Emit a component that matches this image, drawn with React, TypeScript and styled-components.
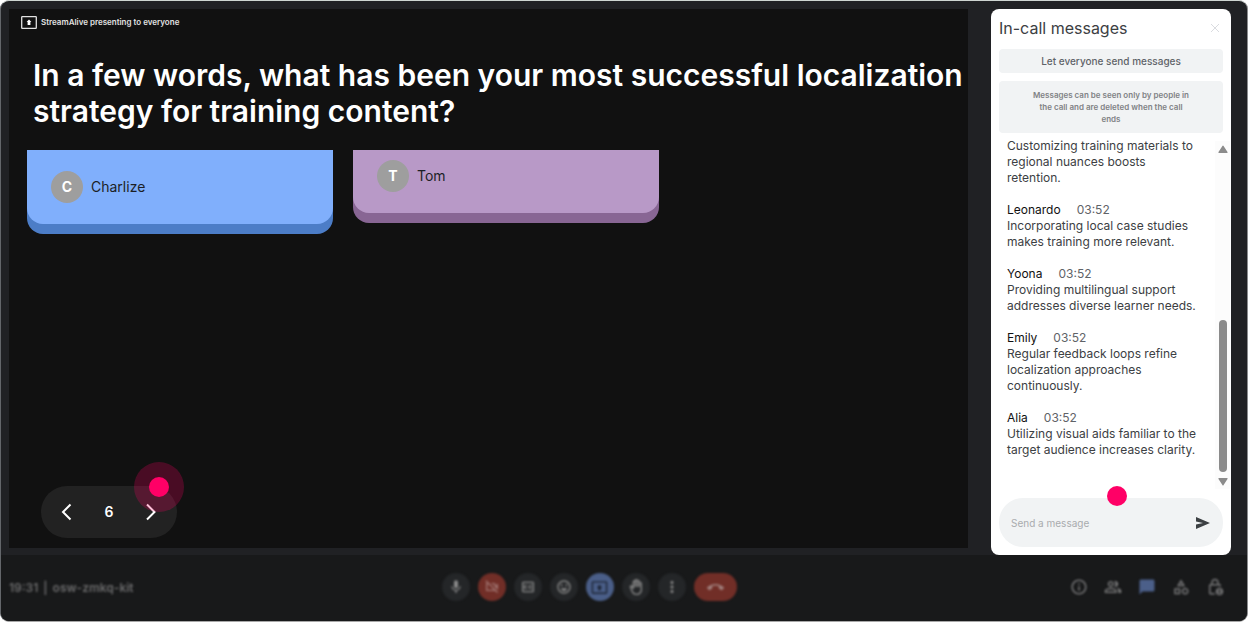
import React from "react";
import styled, { createGlobalStyle, css } from "styled-components";
import {
  MdMic,
  MdOutlineVideocamOff,
  MdOutlineClosedCaption,
  MdOutlineEmojiEmotions,
  MdOutlinePresentToAll,
  MdOutlineBackHand,
  MdMoreVert,
  MdCallEnd,
  MdOutlineInfo,
  MdOutlinePeopleAlt,
  MdModeComment,
  MdOutlineCategory,
  MdOutlineLockPerson,
} from "react-icons/md";

const GlobalStyle = createGlobalStyle`
  *, *::before, *::after { box-sizing: border-box; }
  html, body { margin: 0; background: #fff; }
  body { font-family: Inter, "Liberation Sans", sans-serif; }
  button, input { font: inherit; }
  h1, h2, h3, p, ol { margin: 0; padding: 0; }
`;

const Page = styled.div`
  display: flex;
  min-height: 100vh;
  background: #fff;
`;

const Frame = styled.div`
  flex: 1;
  display: flex;
  flex-direction: column;
  background: #202124;
  border: 1px solid;
  border-color: #ced5d1 #8b8c8e #a8a8a8 #63666a;
  border-radius: 9px;
  overflow: hidden;
`;

const Main = styled.main`
  flex: 1;
  display: flex;
  gap: 23px;
  padding: 8px 16px 0 8px;
`;

const Stage = styled.section`
  flex: 1;
  display: flex;
  flex-direction: column;
  align-items: flex-start;
  margin-bottom: 7px;
  padding: 6px 0 10px 12px;
  background: #111;
  overflow: hidden;
`;

const Presenter = styled.div`
  display: flex;
  align-items: center;
  gap: 4px;
  color: #e2e2e2;
  font-size: 8px;
  font-weight: 600;
  line-height: 14px;
`;

const Question = styled.h1`
  margin: 28px 0 0 12px;
  color: #fff;
  font-size: 30px;
  font-weight: 600;
  line-height: 36px;
`;

const Cards = styled.div`
  display: flex;
  flex-wrap: wrap;
  align-items: flex-start;
  gap: 20px;
  margin: 21px 0 0 6px;
`;

const Card = styled.article<{ $face: string; $edge: string; $top: number }>`
  display: flex;
  align-items: center;
  gap: 8px;
  width: 306px;
  padding: ${(p) => p.$top}px 24px 21px;
  border-radius: 0 0 16px 16px;
  background: ${(p) => p.$face};
  box-shadow: 0 10px 0 ${(p) => p.$edge};
  color: #1c1f26;
  font-size: 14px;
  line-height: 16px;
`;

const Avatar = styled.span`
  display: grid;
  place-items: center;
  width: 32px;
  height: 32px;
  border-radius: 50%;
  background: #9e9e9e;
  color: #fff;
  font-weight: 700;
`;

const Pager = styled.nav`
  position: relative;
  display: flex;
  align-items: center;
  justify-content: space-between;
  width: 136px;
  height: 52px;
  margin: auto 0 0 20px;
  padding: 0 16px;
  border-radius: 26px;
  background: #222;
  color: #fff;
  font-size: 14px;
  font-weight: 600;
  line-height: 16px;
`;

const PagerButton = styled.button`
  display: grid;
  place-items: center;
  width: 20px;
  height: 24px;
  padding: 0;
  border: 0;
  background: none;
  color: #fff;
`;

const Halo = styled.span`
  position: absolute;
  top: -24px;
  right: -7px;
  display: grid;
  place-items: center;
  width: 50px;
  height: 50px;
  border-radius: 50%;
  background: rgba(255, 0, 102, 0.24);
  pointer-events: none;
`;

const Dot = styled.span`
  width: 20px;
  height: 20px;
  border-radius: 50%;
  background: #ff0066;
`;

const Panel = styled.aside`
  display: flex;
  flex-direction: column;
  width: 240px;
  padding: 8px;
  border-radius: 8px;
  background: #fff;
  color: #3c4043;
`;

const PanelHeader = styled.header`
  display: flex;
  align-items: center;
  justify-content: space-between;
  height: 22px;
  margin-bottom: 10px;
`;

const PanelTitle = styled.h2`
  font-size: 16px;
  font-weight: 400;
  line-height: 22px;
`;

const CloseButton = styled.button`
  display: grid;
  place-items: center;
  width: 16px;
  height: 16px;
  padding: 0;
  border: 0;
  background: none;
  color: #dadce0;
`;

const AllowButton = styled.button`
  height: 24px;
  padding: 0;
  border: 0;
  border-radius: 4px;
  background: #f1f3f4;
  color: #5f6368;
  font-size: 10px;
  font-weight: 500;
`;

const Notice = styled.p`
  margin-top: 8px;
  padding: 8px 32px;
  border-radius: 4px;
  background: #f1f3f4;
  color: #808285;
  font-size: 8px;
  font-weight: 600;
  line-height: 12px;
  text-align: center;
`;

const LogArea = styled.div`
  flex: 1;
  display: flex;
  min-height: 0;
  margin: 5px -7px 9px 0;
`;

const Log = styled.ol`
  flex: 1;
  display: flex;
  flex-direction: column;
  justify-content: flex-end;
  gap: 16px;
  padding: 0 16px 31px 8px;
  list-style: none;
  font-size: 12px;
  line-height: 16px;
`;

const MessageMeta = styled.div`
  display: flex;
  gap: 16px;
  color: #5f6368;
`;

const Sender = styled.span`
  color: #111;
`;

const ScrollTrack = styled.div`
  display: flex;
  flex-direction: column;
  align-items: center;
  width: 15px;
  margin-top: 3px;
  padding: 4px 0 3px;
  background: #fcfcfc;
  color: #8b8b8b;
  svg { display: block; }
`;

const ScrollThumb = styled.div`
  width: 8px;
  height: 152px;
  margin: auto 0 6px;
  border-radius: 4px;
  background: #8b8b8b;
`;

const Composer = styled.form`
  position: relative;
  display: flex;
  align-items: center;
  height: 49px;
  padding: 0 12px;
  border-radius: 24px;
  background: #f1f3f4;
`;

const MessageInput = styled.input`
  flex: 1;
  min-width: 0;
  padding: 0;
  border: 0;
  outline: 0;
  background: none;
  font-size: 10px;
  &::placeholder { color: #a9abae; opacity: 1; }
`;

const SendButton = styled.button`
  display: grid;
  padding: 0;
  border: 0;
  background: none;
  color: #3c4043;
`;

const InputMarker = styled(Dot)`
  position: absolute;
  top: -12px;
  left: 108px;
`;

const CallBar = styled.footer`
  display: grid;
  grid-template-columns: 8fr auto 9fr;
  align-items: center;
  height: 66px;
  padding: 0 23px 2px 8px;
  background: #18191a;
  color: #6b6b6c;
`;

const softened = css`
  filter: blur(1px);
`;

const MeetingInfo = styled.div`
  display: flex;
  gap: 5px;
  font-size: 12px;
  font-weight: 600;
  ${softened}
`;

const Controls = styled.div`
  display: flex;
  gap: 8px;
  ${softened}
`;

const ControlButton = styled.button<{ $bg?: string; $fg?: string; $wide?: boolean }>`
  display: grid;
  place-items: center;
  width: ${(p) => (p.$wide ? 43 : 28)}px;
  height: 28px;
  padding: 0;
  border: 0;
  border-radius: 14px;
  background: ${(p) => p.$bg || "#242628"};
  color: ${(p) => p.$fg || "#8a8a8a"};
`;

const Tools = styled.div`
  display: flex;
  justify-content: flex-end;
  gap: 16px;
  ${softened}
`;

const ToolButton = styled.button<{ $active?: boolean }>`
  display: grid;
  padding: 0;
  border: 0;
  background: none;
  color: ${(p) => (p.$active ? "#4b5f89" : "#777778")};
`;

const ChatIcon = styled(MdModeComment)`
  transform: scaleX(-1);
`;

const Chevron = ({ next }: { next?: boolean }) => (
  <svg width="12" height="18" viewBox="0 0 12 18" fill="none" stroke="currentColor" strokeWidth="2">
    <path d={next ? "M2 1.500l7.500 7.500L2 16.500" : "M9.500 1.500L2 9l7.500 7.500"} />
  </svg>
);

const Arrow = ({ down }: { down?: boolean }) => (
  <svg width="10" height="8" viewBox="0 0 10 8" fill="currentColor">
    <path d={down ? "M1 0h8q1 0 .5 1L5.6 7q-.6 1-1.2 0L.5 1Q0 0 1 0z" : "M1 8h8q1 0 .5-1L5.6 1Q5 0 4.4 1L.5 7Q0 8 1 8z"} />
  </svg>
);

const messages = [
  { name: "Leonardo", text: "Incorporating local case studies makes training more relevant." },
  { name: "Yoona", text: "Providing multilingual support addresses diverse learner needs." },
  { name: "Emily", text: "Regular feedback loops refine localization approaches continuously." },
  { name: "Alia", text: "Utilizing visual aids familiar to the target audience increases clarity." },
];

export default function App() {
  return (
    <Page>
      <GlobalStyle />
      <Frame>
        <Main>
          <Stage>
            <Presenter>
              <svg width="16" height="13" viewBox="0 0 16 13" fill="none">
                <rect x="0.7" y="0.7" width="14.6" height="11.6" rx="0.6" stroke="currentColor" strokeWidth="1.3" />
                <path d="M8 3.5l2.4 2.6H9.4v3H6.6v-3H5.6z" fill="#fff" />
              </svg>
              StreamAlive presenting to everyone
            </Presenter>
            <Question>
              In a few words, what has been your most successful localization strategy for training content?
            </Question>
            <Cards>
              <Card $face="#80affc" $edge="#4c7dc7" $top={21}>
                <Avatar>C</Avatar>
                Charlize
              </Card>
              <Card $face="#b899c7" $edge="#886694" $top={10}>
                <Avatar>T</Avatar>
                Tom
              </Card>
            </Cards>
            <Pager aria-label="Questions">
              <PagerButton aria-label="Previous question"><Chevron /></PagerButton>
              <span>6</span>
              <PagerButton aria-label="Next question"><Chevron next /></PagerButton>
              <Halo><Dot /></Halo>
            </Pager>
          </Stage>
          <Panel>
            <PanelHeader>
              <PanelTitle>In-call messages</PanelTitle>
              <CloseButton aria-label="Close messages">
                <svg width="10" height="10" viewBox="0 0 10 10" stroke="currentColor" strokeWidth="1">
                  <path d="M1 1l8 8M9 1L1 9" />
                </svg>
              </CloseButton>
            </PanelHeader>
            <AllowButton>Let everyone send messages</AllowButton>
            <Notice>Messages can be seen only by people in the call and are deleted when the call ends</Notice>
            <LogArea>
              <Log>
                <li>Customizing training materials to regional nuances boosts retention.</li>
                {messages.map((m) => (
                  <li key={m.name}>
                    <MessageMeta>
                      <Sender>{m.name}</Sender>
                      <time>03:52</time>
                    </MessageMeta>
                    <p>{m.text}</p>
                  </li>
                ))}
              </Log>
              <ScrollTrack aria-hidden="true">
                <Arrow />
                <ScrollThumb />
                <Arrow down />
              </ScrollTrack>
            </LogArea>
            <Composer onSubmit={(e) => e.preventDefault()}>
              <MessageInput aria-label="Send a message" placeholder="Send a message" />
              <SendButton aria-label="Send">
                <svg width="16" height="14" viewBox="0 0 16 14" fill="currentColor">
                  <path d="M1 1l14 6L1 13V8.600l7-1.600-7-1.600z" />
                </svg>
              </SendButton>
              <InputMarker />
            </Composer>
          </Panel>
        </Main>
        <CallBar>
          <MeetingInfo>
            <span>19:31</span>
            <span>|</span>
            <span>osw-zmkq-kit</span>
          </MeetingInfo>
          <Controls>
            <ControlButton aria-label="Microphone"><MdMic size={16} /></ControlButton>
            <ControlButton aria-label="Turn on camera" $bg="#712e27" $fg="#a07470"><MdOutlineVideocamOff size={16} /></ControlButton>
            <ControlButton aria-label="Captions"><MdOutlineClosedCaption size={16} /></ControlButton>
            <ControlButton aria-label="Reactions"><MdOutlineEmojiEmotions size={16} /></ControlButton>
            <ControlButton aria-label="Present" $bg="#4a5e88" $fg="#1d2535"><MdOutlinePresentToAll size={17} /></ControlButton>
            <ControlButton aria-label="Raise hand"><MdOutlineBackHand size={16} /></ControlButton>
            <ControlButton aria-label="More options"><MdMoreVert size={18} /></ControlButton>
            <ControlButton aria-label="Leave call" $bg="#712e27" $fg="#a07f7c" $wide><MdCallEnd size={17} /></ControlButton>
          </Controls>
          <Tools>
            <ToolButton aria-label="Meeting details"><MdOutlineInfo size={18} /></ToolButton>
            <ToolButton aria-label="People"><MdOutlinePeopleAlt size={18} /></ToolButton>
            <ToolButton aria-label="Chat" $active><ChatIcon size={18} /></ToolButton>
            <ToolButton aria-label="Activities"><MdOutlineCategory size={18} /></ToolButton>
            <ToolButton aria-label="Host controls"><MdOutlineLockPerson size={18} /></ToolButton>
          </Tools>
        </CallBar>
      </Frame>
    </Page>
  );
}
